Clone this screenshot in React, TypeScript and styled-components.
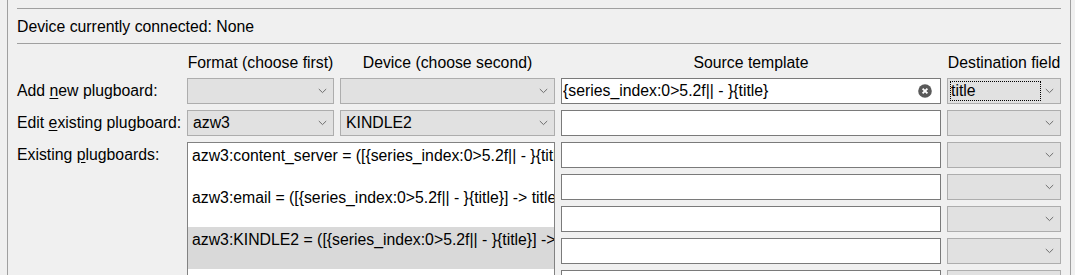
import React from "react";
import styled, { createGlobalStyle } from "styled-components";

const GlobalStyle = createGlobalStyle`
  html, body {
    margin: 0;
    padding: 0;
    background: #f0f0f0;
    overflow: hidden;
  }
  body {
    font-family: "Liberation Sans", Arial, sans-serif;
    font-size: 15.8px;
    color: #000;
  }
`;

interface CellProps {
  row: number;
  col: number;
}

const Frame = styled.div`
  box-sizing: border-box;
  margin-left: 7px;
  width: 1064px;
  height: 275px;
  border-left: 1px solid #a0a0a0;
  border-right: 1px solid #a0a0a0;
  padding: 0 9px;
  overflow: hidden;
`;

const Intro = styled.div`
  height: 8px;
  overflow: hidden;
  border-bottom: 1px solid #a0a0a0;
  span {
    display: block;
    margin-top: -17px;
    line-height: 18px;
    white-space: nowrap;
  }
`;

const DeviceRow = styled.div`
  height: 34px;
  line-height: 36px;
  border-bottom: 1px solid #a0a0a0;
`;

const Grid = styled.div`
  display: grid;
  margin-top: 8px;
  grid-template-columns: 164px 147px 215px 380px 114px;
  grid-template-rows: 20px repeat(7, 26px);
  column-gap: 6px;
  row-gap: 6px;
`;

const Header = styled.div<{ col: number }>`
  grid-column: ${(p) => p.col};
  grid-row: 1;
  text-align: center;
  line-height: 21px;
  white-space: nowrap;
`;

const Label = styled.div<{ row: number }>`
  grid-column: 1;
  grid-row: ${(p) => p.row};
  line-height: 26px;
  white-space: nowrap;
  u {
    text-decoration: underline;
    text-underline-offset: 2px;
  }
`;

const Combo = styled.div<CellProps>`
  grid-column: ${(p) => p.col};
  grid-row: ${(p) => p.row};
  box-sizing: border-box;
  height: 26px;
  background: #e1e1e1;
  border: 1px solid #adadad;
  display: flex;
  align-items: center;
  padding: 0 6px 0 4px;
  gap: 4px;
`;

const ComboText = styled.span<{ focused?: boolean }>`
  flex: 1;
  line-height: 20px;
  height: 20px;
  padding-left: 1px;
  overflow: hidden;
  white-space: nowrap;
  outline: ${(p) => (p.focused ? "1px dotted #000" : "none")};
  outline-offset: -1px;
  margin-left: ${(p) => (p.focused ? "-2px" : "0")};
`;

const TextInput = styled.div<{ row: number }>`
  grid-column: 4;
  grid-row: ${(p) => p.row};
  box-sizing: border-box;
  height: 26px;
  background: #fff;
  border: 1px solid #7a7a7a;
  display: flex;
  align-items: center;
  padding: 0 8px 0 1px;
  white-space: nowrap;
  span {
    flex: 1;
    overflow: hidden;
  }
`;

const List = styled.div`
  grid-column: 2 / 4;
  grid-row: 4 / span 5;
  box-sizing: border-box;
  height: 160px;
  background: #fff;
  border: 1px solid #828282;
  overflow: hidden;
`;

const ListItem = styled.div<{ selected?: boolean }>`
  height: 42px;
  box-sizing: border-box;
  padding: 4px 0 0 4px;
  line-height: 18px;
  white-space: nowrap;
  overflow: hidden;
  background: ${(p) => (p.selected ? "#d9d9d9" : "transparent")};
`;

const Chevron = () => (
  <svg width="9" height="6" viewBox="0 0 9 6">
    <path d="M0.8 1 L4.5 4.6 L8.2 1" fill="none" stroke="#6d6d6d" strokeWidth="1" />
  </svg>
);

const ClearIcon = () => (
  <svg width="14" height="14" viewBox="0 0 14 14">
    <circle cx="7" cy="7" r="6.8" fill="#5a5a5a" />
    <path d="M4.6 4.6 L9.4 9.4 M9.4 4.6 L4.6 9.4" stroke="#fff" strokeWidth="1.9" />
  </svg>
);

const DropDown = ({ row, col, text, focused }: CellProps & { text?: string; focused?: boolean }) => (
  <Combo row={row} col={col}>
    <ComboText focused={focused}>{text}</ComboText>
    <Chevron />
  </Combo>
);

const template = "{series_index:0>5.2f|| - }{title}";

const plugboards = [
  { name: `azw3:content_server = ([${template}] -> title)`, selected: false },
  { name: `azw3:email = ([${template}] -> title)`, selected: false },
  { name: `azw3:KINDLE2 = ([${template}] -> title)`, selected: true },
];

export default function App() {
  return (
    <>
      <GlobalStyle />
      <Frame>
        <Intro>
          <span>
            Here you can change the metadata calibre uses to update a book when saving to disk or sending to a device, by using plugboards to assign templates to fields.
          </span>
        </Intro>
        <DeviceRow>Device currently connected: None</DeviceRow>
        <Grid>
          <Header col={2}>Format (choose first)</Header>
          <Header col={3}>Device (choose second)</Header>
          <Header col={4}>Source template</Header>
          <Header col={5}>Destination field</Header>

          <Label row={2}>
            Add <u>n</u>ew plugboard:
          </Label>
          <DropDown row={2} col={2} />
          <DropDown row={2} col={3} />
          <TextInput row={2}>
            <span>{template}</span>
            <ClearIcon />
          </TextInput>
          <DropDown row={2} col={5} text="title" focused />

          <Label row={3}>
            Edit <u>e</u>xisting plugboard:
          </Label>
          <DropDown row={3} col={2} text="azw3" />
          <DropDown row={3} col={3} text="KINDLE2" />
          <TextInput row={3} />
          <DropDown row={3} col={5} />

          <Label row={4}>
            Existing <u>p</u>lugboards:
          </Label>
          <List>
            {plugboards.map((p) => (
              <ListItem key={p.name} selected={p.selected}>
                {p.name}
              </ListItem>
            ))}
          </List>
          {[4, 5, 6, 7, 8].map((r) => (
            <React.Fragment key={r}>
              <TextInput row={r} />
              <DropDown row={r} col={5} />
            </React.Fragment>
          ))}
        </Grid>
      </Frame>
    </>
  );
}
